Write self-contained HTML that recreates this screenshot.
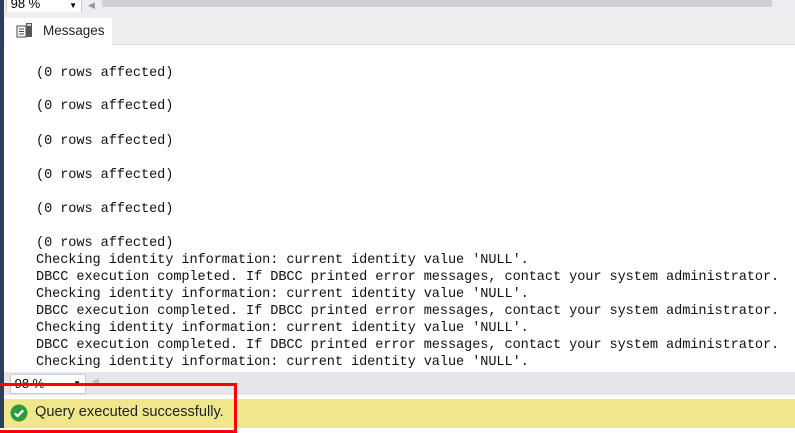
<!DOCTYPE html>
<html><head><style>
body{margin:0;width:795px;height:428px;overflow:hidden;background:#fff;position:relative;font-family:"Liberation Sans",sans-serif}
.a{position:absolute}
.m{position:absolute;left:36px;font-family:"Liberation Mono",monospace;font-size:13.6px;letter-spacing:-0.08px;line-height:17px;color:#111;white-space:pre}
</style></head><body>
<div class="a" style="left:0;top:0;width:795px;height:12px;background:#eeeef2"></div>
<div class="a" style="left:6px;top:-4px;width:74px;height:15px;background:#fff;border:1px solid #ccc;font-size:13px;line-height:13px">&nbsp;98 %<span style="position:absolute;right:4px;top:2px;font-size:8px">▼</span></div>
<div class="a" style="left:88px;top:0;font-size:9px;color:#999">◀</div>
<div class="a" style="left:102px;top:0;width:670px;height:7px;background:#d0d0d6"></div>
<div class="a" style="left:0;top:12px;width:795px;height:32px;background:#eeeeee;border-bottom:1px solid #d8d8d8"></div>
<div class="a" style="left:5px;top:18px;width:107px;height:27px;background:#fff"></div>
<svg class="a" style="left:16px;top:22px" width="18" height="16" viewBox="0 0 18 16"><rect x="1" y="4" width="9" height="11" fill="#fff" stroke="#444"/><path d="M3 7h5M3 9.5h5M3 12h5" stroke="#444"/><rect x="10" y="1" width="6" height="14" fill="#555"/><rect x="11" y="2" width="4" height="2" fill="#ccc"/></svg>
<div class="a" style="left:43px;top:23px;font-size:13.5px;color:#222">Messages</div>
<div class="a" style="left:0;top:0;width:4px;height:428px;background:#2e3d5a"></div>
<div class="m" style="top:65px">(0 rows affected)</div>
<div class="m" style="top:98px">(0 rows affected)</div>
<div class="m" style="top:133px">(0 rows affected)</div>
<div class="m" style="top:167px">(0 rows affected)</div>
<div class="m" style="top:201px">(0 rows affected)</div>
<div class="m" style="top:235px">(0 rows affected)
Checking identity information: current identity value 'NULL'.
DBCC execution completed. If DBCC printed error messages, contact your system administrator.
Checking identity information: current identity value 'NULL'.
DBCC execution completed. If DBCC printed error messages, contact your system administrator.
Checking identity information: current identity value 'NULL'.
DBCC execution completed. If DBCC printed error messages, contact your system administrator.
Checking identity information: current identity value 'NULL'.</div>
<div class="a" style="left:4px;top:372px;width:791px;height:23px;background:#e6e6ea"></div>
<div class="a" style="left:10px;top:374px;width:74px;height:18px;background:#fff;border:1px solid #ccc;font-size:13px;line-height:18px">&nbsp;98 %<span style="position:absolute;right:4px;top:0;font-size:8px">▼</span></div>
<div class="a" style="left:92px;top:376px;font-size:9px;color:#bbb">◀</div>
<div class="a" style="left:4px;top:399px;width:791px;height:29px;background:#f0e68c"></div>
<svg class="a" style="left:10px;top:404px" width="18" height="18" viewBox="0 0 18 18"><circle cx="9" cy="9" r="8.5" fill="#2e9a3e"/><path d="M4.8 9.3l2.8 2.8 5.6-5.8" stroke="#fff" stroke-width="2.2" fill="none"/></svg>
<div class="a" style="left:35px;top:404px;font-size:14.6px;color:#222">Query executed successfully.</div>
<div class="a" style="left:-3px;top:383px;width:240px;height:50px;border:3px solid #f00;box-sizing:border-box"></div>
</body></html>
